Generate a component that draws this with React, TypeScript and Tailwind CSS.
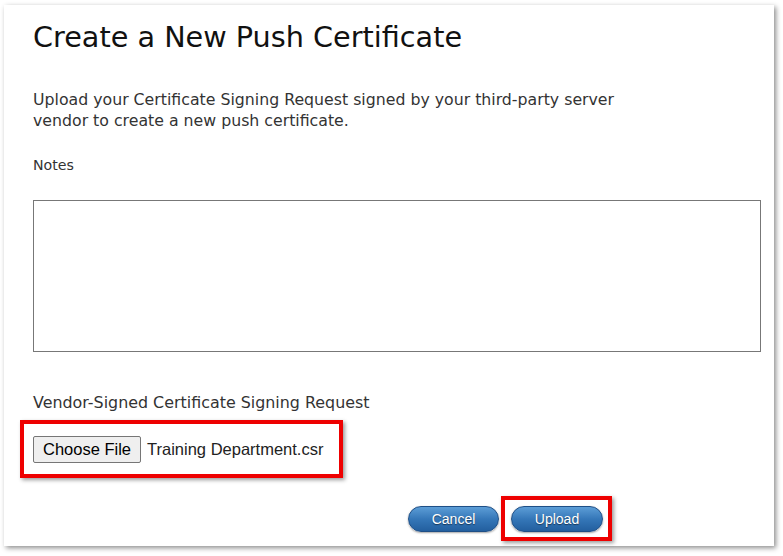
import React from "react"

const sans = "font-['DejaVu_Sans','Verdana',sans-serif]"
const arial = "font-['Liberation_Sans','Arial',sans-serif]"

function PillButton({ label }: { label: string }) {
  return (
    <button
      className={`${arial} h-[26px] w-full rounded-full border border-[#1f4f86] bg-[linear-gradient(#5c9dd6,#3577b8_50%,#235f9f)] text-[14px] leading-none text-white shadow-[0_1px_2px_rgba(0,0,0,0.35)] [text-shadow:0_1px_1px_rgba(0,0,0,0.5)]`}
    >
      {label}
    </button>
  )
}

export default function App() {
  return (
    <div className="h-[556px] w-[783px] bg-white pl-[4px] pt-[5px]">
      <div
        className={`${sans} flex h-[541px] w-[770px] flex-col bg-white pl-[29px] pr-[14px] pt-[15px] text-[#333] shadow-[2px_2px_5px_rgba(0,0,0,0.45)]`}
      >
        <h1 className="text-[28.7px] font-normal leading-[34px] text-[#111]">
          Create a New Push Certificate
        </h1>

        <p className="mt-[35px] text-[15.75px] leading-[21px]">
          Upload your Certificate Signing Request signed by your third-party server
          <br />
          vendor to create a new push certificate.
        </p>

        <label className="mt-[24px] text-[14.2px] leading-[21px]">Notes</label>

        <textarea className="mt-[24px] h-[152px] w-[728px] resize-none border border-[#777] outline-none" />

        <label className="mt-[40px] text-[15.9px] leading-[21px]">
          Vendor-Signed Certificate Signing Request
        </label>

        <div className="-ml-[13px] mt-[7px] flex h-[58px] w-[323px] items-start border-4 border-[#ee0000] pl-[9px] pt-[12px] shadow-[2px_2px_4px_rgba(0,0,0,0.4)]">
          <button
            className={`${arial} h-[27px] rounded-[2px] border border-[#767676] bg-[#efefef] px-[9px] text-[16.5px] leading-none text-black`}
          >
            Choose File
          </button>
          <span className={`${arial} ml-[6px] mt-[3px] text-[16.5px] leading-[20px] text-[#222]`}>
            Training Department.csr
          </span>
        </div>

        <div className="mt-[18px] flex items-center pl-[375px]">
          <div className="w-[91px]">
            <PillButton label="Cancel" />
          </div>
          <div className="ml-[2px] flex h-[45px] w-[111px] items-center border-4 border-[#ee0000] pl-[6px] shadow-[2px_2px_4px_rgba(0,0,0,0.4)]">
            <div className="w-[92px]">
              <PillButton label="Upload" />
            </div>
          </div>
        </div>
      </div>
    </div>
  )
}
